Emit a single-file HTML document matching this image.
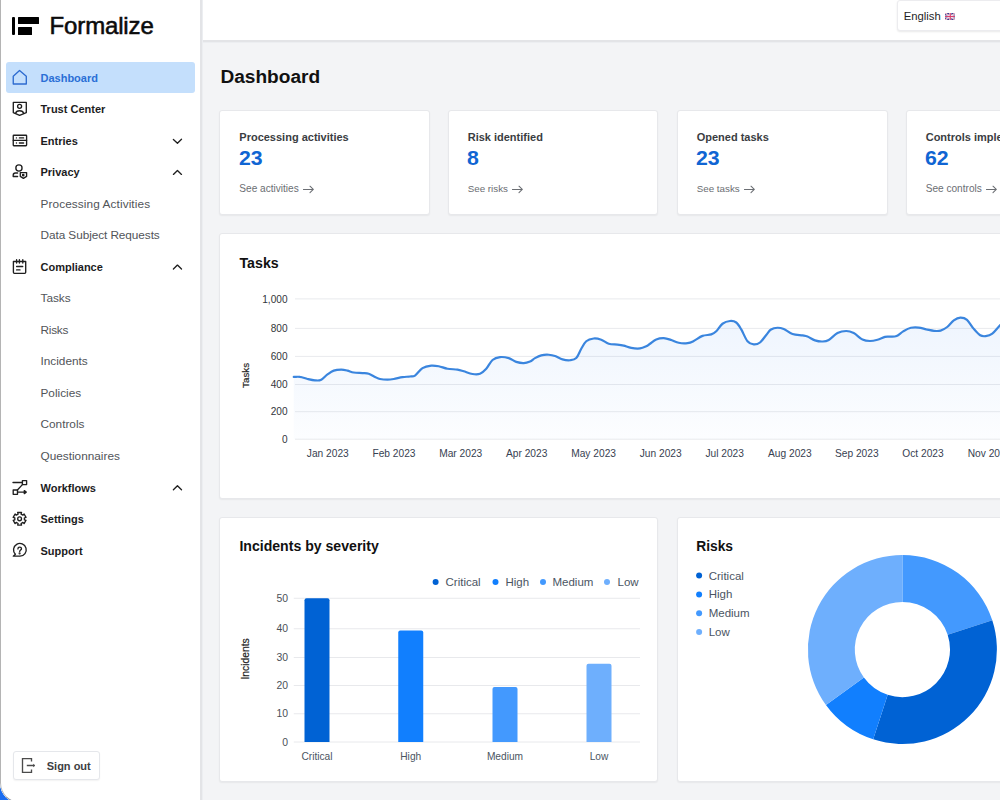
<!DOCTYPE html>
<html><head><meta charset="utf-8"><title>Formalize Dashboard</title>
<style>
*{box-sizing:border-box;margin:0;padding:0}
html,body{width:1000px;height:800px;overflow:hidden;background:#1a6cf0}
body{font-family:"Liberation Sans",sans-serif;position:relative}
#win{position:absolute;left:0;top:0;width:1000px;height:803px;background:#f3f4f6;border-bottom-left-radius:20px;overflow:hidden}
#frame{position:absolute;left:0;top:0;width:1000px;height:803px;border-left:1.5px solid #b4b4b4;border-bottom:1.5px solid #8a8f99;border-bottom-left-radius:20px}
.t{position:absolute;white-space:nowrap;line-height:0}
#side{position:absolute;left:0;top:0;width:202px;height:803px;background:#fff;border-right:2px solid #e3e4e7;box-shadow:1px 0 0 #eceef1}
#head{position:absolute;left:203px;top:0;width:797px;height:42px;background:#fff;border-bottom:2px solid #e3e4e7;box-shadow:0 1px 0 #eceef1}
.ic{position:absolute;left:8px;width:24px;height:24px;overflow:visible}
.card{position:absolute;background:#fff;border:1px solid #e7e8eb;border-radius:3px;box-shadow:0 1px 1.5px rgba(0,0,0,.05)}
svg text{font-family:"Liberation Sans",sans-serif}
</style></head><body>
<div id="win">
<div id="side">
<div style="position:absolute;left:12.25px;top:16.5px;width:3px;height:18px;background:#000;border-radius:1px"></div>
<div style="position:absolute;left:17.5px;top:16.6px;width:21.25px;height:7.9px;background:#000;border-radius:.5px"></div>
<div style="position:absolute;left:17.5px;top:26.9px;width:14px;height:7.7px;background:#000;border-radius:.5px"></div>
<div class="t" style="left:49.6px;top:26.18px;font-size:24px;color:#0b0b0b;letter-spacing:-0.15px;-webkit-text-stroke:0.55px #0b0b0b">Formalize</div>
<div style="position:absolute;left:6px;top:62px;width:189px;height:31px;background:#c4dffc;border-radius:3px"></div>
<div class="t" style="left:40.5px;top:77.69px;font-size:11px;color:#2a6fd6;font-weight:bold">Dashboard</div>
<div class="t" style="left:40.5px;top:109.22px;font-size:11px;color:#1c1c1e;font-weight:bold">Trust Center</div>
<div class="t" style="left:40.5px;top:140.75px;font-size:11px;color:#1c1c1e;font-weight:bold">Entries</div>
<div class="t" style="left:40.5px;top:172.28px;font-size:11px;color:#1c1c1e;font-weight:bold">Privacy</div>
<div class="t" style="left:40.5px;top:203.53px;font-size:11.8px;color:#515459;letter-spacing:0.1px">Processing Activities</div>
<div class="t" style="left:40.5px;top:235.06px;font-size:11.8px;color:#515459;letter-spacing:-0.07px">Data Subject Requests</div>
<div class="t" style="left:40.5px;top:266.87px;font-size:11px;color:#1c1c1e;font-weight:bold">Compliance</div>
<div class="t" style="left:40.5px;top:298.12px;font-size:11.8px;color:#515459;letter-spacing:0px">Tasks</div>
<div class="t" style="left:40.5px;top:329.65px;font-size:11.8px;color:#515459;letter-spacing:-0.25px">Risks</div>
<div class="t" style="left:40.5px;top:361.18px;font-size:11.8px;color:#515459;letter-spacing:0px">Incidents</div>
<div class="t" style="left:40.5px;top:392.71px;font-size:11.8px;color:#515459;letter-spacing:0px">Policies</div>
<div class="t" style="left:40.5px;top:424.24px;font-size:11.8px;color:#515459;letter-spacing:0px">Controls</div>
<div class="t" style="left:40.5px;top:455.77px;font-size:11.8px;color:#515459;letter-spacing:0px">Questionnaires</div>
<div class="t" style="left:40.5px;top:487.58px;font-size:11px;color:#1c1c1e;font-weight:bold">Workflows</div>
<div class="t" style="left:40.5px;top:519.11px;font-size:11px;color:#1c1c1e;font-weight:bold">Settings</div>
<div class="t" style="left:40.5px;top:550.64px;font-size:11px;color:#1c1c1e;font-weight:bold">Support</div>
<svg class="ic" style="top:66px" viewBox="0 0 24 24"><path d="M5.25,18 V10.2 L11.55,4.5 L18.3,10.2 V18 Z" fill="none" stroke="#2d6bd0" stroke-width="1.35" stroke-linejoin="round"/></svg>
<svg class="ic" style="top:97px" viewBox="0 0 24 24"><g fill="none" stroke="#1f1f1f" stroke-width="1.35" stroke-linecap="round" stroke-linejoin="round"><path d="M5.3,5.4 H18.3 V15.6 L11.6,18.3 L5.3,15.6 Z"/><circle cx="11.6" cy="9.3" r="2"/><path d="M7.6,16.4 C8,14.5 9.5,13.7 11.6,13.7 C13.7,13.7 15.2,14.5 15.6,16.4"/></g></svg>
<svg class="ic" style="top:128px" viewBox="0 0 24 24"><g fill="none" stroke="#1f1f1f" stroke-width="1.35" stroke-linecap="round" stroke-linejoin="round"><rect x="5.25" y="7.2" width="13.35" height="10.5" rx=".6"/><path d="M5.25,12.3 H18.6"/><path d="M8.4,9.9 h.1 M11.4,9.9 H15.6 M8.4,15 h.1 M11.4,15 H15.6"/></g></svg>
<svg class="ic" style="top:160px" viewBox="0 0 24 24"><g fill="none" stroke="#1f1f1f" stroke-width="1.35" stroke-linecap="round" stroke-linejoin="round"><circle cx="10.95" cy="7.95" r="3.1"/><path d="M9.6,13 H7.4 C6,13 5.2,14 5.2,15.2 V16.5 H9.6"/><path d="M12.3,12.6 H18.6 V16.4 L15.4,18.4 L12.3,16.4 Z"/><circle cx="15.2" cy="15.2" r=".7" fill="#1f1f1f"/></g></svg>
<svg class="ic" style="top:254px" viewBox="0 0 24 24"><g fill="none" stroke="#1f1f1f" stroke-width="1.35" stroke-linecap="round" stroke-linejoin="round"><path d="M5.4,7.5 H17.7 V18.3 Q17.7,19.3 16.7,19.3 H6.4 Q5.4,19.3 5.4,18.3 Z"/><path d="M8.6,5.7 V9 M11.4,5.7 V9 M14.8,5.7 V9"/><path d="M8.6,12.5 H14.7 M8.6,15.9 H12"/></g></svg>
<svg class="ic" style="top:475px" viewBox="0 0 24 24"><g fill="none" stroke="#1f1f1f" stroke-width="1.35" stroke-linecap="round" stroke-linejoin="round"><path d="M5,7.5 H14.4"/><rect x="14.4" y="5.6" width="4.2" height="4"/><path d="M14.4,9.6 L9.4,15"/><rect x="5.2" y="15" width="4.3" height="4.3"/><path d="M9.5,17.1 H17.6"/><path d="M16.3,15.6 L18.2,17.1 L16.3,18.6 Z" fill="#1f1f1f"/></g></svg>
<svg class="ic" style="top:506px" viewBox="0 0 24 24"><g fill="none" stroke="#1f1f1f" stroke-width="1.35" stroke-linecap="round" stroke-linejoin="round"><path d="M9.67,6.49 L13.53,6.49 L13.11,8.14 L14.88,9.16 L16.10,7.97 L18.03,11.32 L16.39,11.78 L16.39,13.82 L18.03,14.28 L16.10,17.63 L14.88,16.44 L13.11,17.46 L13.53,19.11 L9.67,19.11 L10.09,17.46 L8.32,16.44 L7.10,17.63 L5.17,14.28 L6.81,13.82 L6.81,11.78 L5.17,11.32 L7.10,7.97 L8.32,9.16 L10.09,8.14Z"/><circle cx="11.6" cy="12.8" r="1.9"/></g></svg>
<svg class="ic" style="top:538px" viewBox="0 0 24 24"><g fill="none" stroke="#1f1f1f" stroke-width="1.35" stroke-linecap="round" stroke-linejoin="round"><path d="M7.4,16.3 A6.35,6.35 0 1 1 12,18.15 H5.3 Z"/><path d="M9.9,10.9 C9.9,9.7 10.7,9.1 11.7,9.1 C12.7,9.1 13.5,9.8 13.5,10.7 C13.5,11.9 11.7,12.1 11.7,13.4"/><circle cx="11.6" cy="15.4" r=".4" fill="#1f1f1f"/></g></svg>
<svg style="position:absolute;left:0;top:0;width:202px;height:800px;overflow:visible" viewBox="0 0 202 800"><path d="M173.4,139.50 L177.45,143.20 L181.5,139.30" fill="none" stroke="#1f1f1f" stroke-width="1.35" stroke-linecap="round" stroke-linejoin="round"/></svg>
<svg style="position:absolute;left:0;top:0;width:202px;height:800px;overflow:visible" viewBox="0 0 202 800"><path d="M173.4,174.40 L177.45,170.50 L181.5,174.40" fill="none" stroke="#1f1f1f" stroke-width="1.35" stroke-linecap="round" stroke-linejoin="round"/></svg>
<svg style="position:absolute;left:0;top:0;width:202px;height:800px;overflow:visible" viewBox="0 0 202 800"><path d="M173.4,269.00 L177.45,265.10 L181.5,269.00" fill="none" stroke="#1f1f1f" stroke-width="1.35" stroke-linecap="round" stroke-linejoin="round"/></svg>
<svg style="position:absolute;left:0;top:0;width:202px;height:800px;overflow:visible" viewBox="0 0 202 800"><path d="M173.4,489.70 L177.45,485.80 L181.5,489.70" fill="none" stroke="#1f1f1f" stroke-width="1.35" stroke-linecap="round" stroke-linejoin="round"/></svg>
<div style="position:absolute;left:12.5px;top:751.25px;width:87.5px;height:28.75px;border:1px solid #e5e7eb;border-radius:3px;background:#fff;box-shadow:0 1px 1.5px rgba(0,0,0,.05)"></div>
<svg style="position:absolute;left:0;top:740px;width:60px;height:60px" viewBox="0 0 60 60"><g fill="none" stroke="#4b4b4b" stroke-width="1.35"><path d="M31.5,21.6 V18.6 H22.5 V32.4 H31.5 V29.4"/><path d="M26.8,25.5 H34.5"/></g><path d="M33.2,23.8 L35.2,25.5 L33.2,27.2 Z" fill="#4b4b4b"/></svg>
<div class="t" style="left:46.75px;top:766.19px;font-size:11px;color:#3d3e42;font-weight:bold">Sign out</div>
</div>
<div id="head"></div>
<div style="position:absolute;left:897px;top:-0.5px;width:120px;height:31.5px;border:1px solid #ececef;border-radius:3px;background:#fff;box-shadow:0 1px 2px rgba(0,0,0,.09)"></div>
<div class="t" style="left:903.7px;top:16.08px;font-size:11.3px;color:#1f1f1f">English</div>
<svg style="position:absolute;left:944.5px;top:12.5px;width:10.5px;height:7px" viewBox="0 0 60 40"><rect width="60" height="40" fill="#3b3f8f"/><path d="M0,0 L60,40 M60,0 L0,40" stroke="#fff" stroke-width="8"/><path d="M0,0 L60,40 M60,0 L0,40" stroke="#d8416e" stroke-width="3"/><path d="M30,0 V40 M0,20 H60" stroke="#fff" stroke-width="12"/><path d="M30,0 V40 M0,20 H60" stroke="#d8416e" stroke-width="7"/></svg>
<div class="t" style="left:220.4px;top:76.98px;font-size:19.1px;color:#111;font-weight:bold">Dashboard</div>
<div class="card" style="left:219px;top:110px;width:211px;height:105px"></div>
<div class="t" style="left:239.3px;top:137.19px;font-size:11px;color:#3a3d42;font-weight:bold">Processing activities</div>
<div class="t" style="left:239px;top:158.24px;font-size:19.5px;color:#1065d3;font-weight:bold;transform:scaleX(1.09);transform-origin:0 0">23</div>
<div class="t" style="left:239.3px;top:189.00px;font-size:10.1px;color:#6b6e73">See activities</div>
<svg style="position:absolute;left:302.80px;top:184px;width:12px;height:11px" viewBox="0 0 12 11"><path d="M0.3,5.4 H10.2 M7,2.2 L10.3,5.4 L7,8.6" fill="none" stroke="#6b6e73" stroke-width="1.05" stroke-linecap="round" stroke-linejoin="round"/></svg>
<div class="card" style="left:448px;top:110px;width:210px;height:105px"></div>
<div class="t" style="left:467.7px;top:137.19px;font-size:11px;color:#3a3d42;font-weight:bold">Risk identified</div>
<div class="t" style="left:467.4px;top:158.24px;font-size:19.5px;color:#1065d3;font-weight:bold;transform:scaleX(1.09);transform-origin:0 0">8</div>
<div class="t" style="left:467.7px;top:189.10px;font-size:9.8px;color:#6b6e73">See risks</div>
<svg style="position:absolute;left:512.00px;top:184px;width:12px;height:11px" viewBox="0 0 12 11"><path d="M0.3,5.4 H10.2 M7,2.2 L10.3,5.4 L7,8.6" fill="none" stroke="#6b6e73" stroke-width="1.05" stroke-linecap="round" stroke-linejoin="round"/></svg>
<div class="card" style="left:677px;top:110px;width:211px;height:105px"></div>
<div class="t" style="left:696.6999999999999px;top:137.19px;font-size:11px;color:#3a3d42;font-weight:bold">Opened tasks</div>
<div class="t" style="left:696.4px;top:158.24px;font-size:19.5px;color:#1065d3;font-weight:bold;transform:scaleX(1.09);transform-origin:0 0">23</div>
<div class="t" style="left:696.6999999999999px;top:189.10px;font-size:9.8px;color:#6b6e73">See tasks</div>
<svg style="position:absolute;left:743.73px;top:184px;width:12px;height:11px" viewBox="0 0 12 11"><path d="M0.3,5.4 H10.2 M7,2.2 L10.3,5.4 L7,8.6" fill="none" stroke="#6b6e73" stroke-width="1.05" stroke-linecap="round" stroke-linejoin="round"/></svg>
<div class="card" style="left:906px;top:110px;width:211px;height:105px"></div>
<div class="t" style="left:925.6999999999999px;top:137.19px;font-size:11px;color:#3a3d42;font-weight:bold">Controls implemented</div>
<div class="t" style="left:925.4px;top:158.24px;font-size:19.5px;color:#1065d3;font-weight:bold;transform:scaleX(1.09);transform-origin:0 0">62</div>
<div class="t" style="left:925.6999999999999px;top:189.00px;font-size:10.1px;color:#6b6e73">See controls</div>
<svg style="position:absolute;left:985.84px;top:184px;width:12px;height:11px" viewBox="0 0 12 11"><path d="M0.3,5.4 H10.2 M7,2.2 L10.3,5.4 L7,8.6" fill="none" stroke="#6b6e73" stroke-width="1.05" stroke-linecap="round" stroke-linejoin="round"/></svg>
<div class="card" style="left:219px;top:233px;width:900px;height:266px"></div>
<div class="t" style="left:239.5px;top:262.58px;font-size:14.2px;color:#111;font-weight:bold">Tasks</div>
<div class="card" style="left:219px;top:517px;width:439px;height:265px"></div>
<div class="t" style="left:239.4px;top:546.41px;font-size:14.1px;color:#111;font-weight:bold">Incidents by severity</div>
<div class="card" style="left:677px;top:517px;width:400px;height:265px"></div>
<div class="t" style="left:696.2px;top:546.92px;font-size:13.8px;color:#111;font-weight:bold">Risks</div>
<svg style="position:absolute;left:0;top:0;width:1000px;height:800px" viewBox="0 0 1000 800"><defs><linearGradient id="ag" x1="0" y1="0" x2="0" y2="1"><stop offset="0" stop-color="#3b86f0" stop-opacity=".085"/><stop offset="1" stop-color="#3b86f0" stop-opacity=".015"/></linearGradient></defs><line x1="295" x2="1000" y1="439.20" y2="439.20" stroke="#e9eaed" stroke-width="1"/><text x="287.5" y="442.80" font-size="10.1" fill="#33363b" text-anchor="end">0</text><line x1="295" x2="1000" y1="411.70" y2="411.70" stroke="#e9eaed" stroke-width="1"/><text x="287.5" y="415.30" font-size="10.1" fill="#33363b" text-anchor="end">200</text><line x1="295" x2="1000" y1="384.50" y2="384.50" stroke="#e9eaed" stroke-width="1"/><text x="287.5" y="388.10" font-size="10.1" fill="#33363b" text-anchor="end">400</text><line x1="295" x2="1000" y1="356.40" y2="356.40" stroke="#e9eaed" stroke-width="1"/><text x="287.5" y="360.00" font-size="10.1" fill="#33363b" text-anchor="end">600</text><line x1="295" x2="1000" y1="328.40" y2="328.40" stroke="#e9eaed" stroke-width="1"/><text x="287.5" y="332.00" font-size="10.1" fill="#33363b" text-anchor="end">800</text><line x1="295" x2="1000" y1="298.90" y2="298.90" stroke="#e9eaed" stroke-width="1"/><text x="287.5" y="302.50" font-size="10.1" fill="#33363b" text-anchor="end">1,000</text><path d="M293.75,376.9 C296.1,376.9 297.7,376.5 300,376.9 C302.3,377.2 305.0,378.4 307.5,379 C310.0,379.6 312.7,380.3 315,380.4 C317.3,380.5 319.2,380.8 321.25,379.75 C323.3,378.8 325.4,375.9 327.5,374.4 C329.6,372.9 331.5,371.4 333.75,370.6 C336.0,369.8 339.0,369.6 341.25,369.6 C343.5,369.6 345.4,370.1 347.5,370.6 C349.6,371.1 351.2,372.1 353.75,372.5 C356.2,372.9 360.0,372.9 362.5,373.1 C365.0,373.3 366.7,373.1 368.75,373.75 C370.8,374.4 373.1,376.0 375,376.9 C376.9,377.8 377.9,378.6 380,379 C382.1,379.4 385.2,379.6 387.5,379.6 C389.8,379.6 391.2,379.4 393.75,379 C396.2,378.6 399.8,377.5 402.5,377.1 C405.2,376.7 407.9,376.8 410,376.5 C412.1,376.2 412.9,377.0 415,375.6 C417.1,374.2 419.8,369.8 422.5,368.1 C425.2,366.4 428.5,365.9 431.25,365.6 C434.0,365.3 436.0,365.7 438.75,366.25 C441.5,366.8 444.4,368.2 447.5,368.75 C450.6,369.3 454.8,369.2 457.5,369.6 C460.2,370.0 461.2,370.5 463.75,371.25 C466.2,372.0 469.8,373.6 472.5,374 C475.2,374.4 477.7,374.6 480,373.75 C482.3,372.9 484.2,371.0 486.25,368.75 C488.3,366.5 490.2,361.9 492.5,360 C494.8,358.1 497.3,357.4 500,357.1 C502.7,356.8 506.0,357.3 508.75,358.1 C511.5,358.9 513.8,361.1 516.25,361.9 C518.8,362.7 521.5,363.2 523.75,363.1 C526.0,363.1 528.1,362.4 530,361.6 C531.9,360.8 533.1,359.1 535,358.1 C536.9,357.1 539.0,356.0 541.25,355.4 C543.5,354.8 546.5,354.6 548.75,354.75 C551.0,354.9 552.7,355.2 555,356 C557.3,356.8 560.0,358.7 562.5,359.4 C565.0,360.1 567.7,360.5 570,360.25 C572.3,360.0 574.4,360.0 576.25,358.1 C578.1,356.2 579.6,351.6 581.25,348.75 C582.9,345.9 584.2,343.0 586.25,341.25 C588.3,339.5 591.2,338.8 593.75,338.5 C596.2,338.2 598.8,338.9 601.25,339.75 C603.8,340.6 606.0,342.9 608.75,343.75 C611.5,344.6 615.0,344.3 617.5,344.6 C620.0,344.9 621.5,345.1 623.75,345.6 C626.0,346.2 628.5,347.4 631.25,347.9 C634.0,348.4 637.5,348.7 640,348.4 C642.5,348.1 644.6,347.0 646.25,346.25 C647.9,345.5 648.3,344.9 650,343.75 C651.7,342.6 654.0,340.3 656.25,339.4 C658.5,338.5 661.2,338.0 663.75,338.1 C666.2,338.2 668.8,339.2 671.25,340 C673.8,340.8 676.0,342.2 678.75,342.75 C681.5,343.3 685.0,343.4 687.5,343.1 C690.0,342.8 691.2,342.2 693.75,341 C696.2,339.8 699.6,337.0 702.5,335.9 C705.4,334.8 709.0,335.2 711.25,334.4 C713.5,333.6 714.4,333.0 716.25,331.25 C718.1,329.5 720.2,325.5 722.5,323.75 C724.8,322.0 727.7,321.2 730,321 C732.3,320.8 734.4,321.1 736.25,322.5 C738.1,323.9 739.4,326.3 741.25,329.4 C743.1,332.5 745.4,338.8 747.5,341.25 C749.6,343.8 751.7,344.2 753.75,344.4 C755.8,344.6 757.9,344.1 760,342.5 C762.1,340.9 764.4,337.2 766.25,335 C768.1,332.8 769.1,330.7 771,329.5 C772.9,328.3 775.4,327.8 777.5,327.75 C779.6,327.7 781.2,328.0 783.75,329 C786.2,330.0 789.4,332.9 792.5,334 C795.6,335.1 800.0,335.0 802.5,335.4 C805.0,335.8 805.4,335.7 807.5,336.5 C809.6,337.3 812.5,339.6 815,340.4 C817.5,341.2 820.2,341.6 822.5,341.5 C824.8,341.4 826.2,341.4 828.75,340 C831.2,338.6 834.6,334.6 837.5,333.1 C840.4,331.6 843.5,331.0 846.25,331 C849.0,331.0 851.0,331.7 853.75,333.1 C856.5,334.5 859.8,338.3 862.5,339.6 C865.2,340.9 867.5,341.0 870,341 C872.5,341.0 875.0,340.4 877.5,339.75 C880.0,339.1 882.9,337.4 885,336.9 C887.1,336.4 888.1,336.8 890,336.6 C891.9,336.5 894.4,336.9 896.6,336 C898.8,335.1 900.8,332.8 903.2,331.4 C905.6,330.0 908.3,328.4 910.9,327.8 C913.5,327.2 916.0,327.3 918.6,327.55 C921.2,327.8 923.7,328.8 926.3,329.4 C928.9,329.9 931.6,330.7 934,330.85 C936.4,331.1 938.4,331.2 940.6,330.6 C942.8,330.0 945.0,328.7 947.2,327 C949.4,325.3 951.6,322.0 953.8,320.4 C956.0,318.8 958.2,317.7 960.4,317.65 C962.6,317.6 964.8,318.0 967,319.85 C969.2,321.7 971.4,326.1 973.6,328.65 C975.8,331.2 978.2,334.0 980.2,335.25 C982.2,336.5 983.7,336.4 985.7,336.1 C987.7,335.8 989.9,335.4 992.3,333.6 C994.7,331.8 997.4,328.0 1000,325.35 C1002.6,322.8 1005.3,319.7 1008,318 L1008,439.2 L293.75,439.2 Z" fill="url(#ag)"/><path d="M293.75,376.9 C296.1,376.9 297.7,376.5 300,376.9 C302.3,377.2 305.0,378.4 307.5,379 C310.0,379.6 312.7,380.3 315,380.4 C317.3,380.5 319.2,380.8 321.25,379.75 C323.3,378.8 325.4,375.9 327.5,374.4 C329.6,372.9 331.5,371.4 333.75,370.6 C336.0,369.8 339.0,369.6 341.25,369.6 C343.5,369.6 345.4,370.1 347.5,370.6 C349.6,371.1 351.2,372.1 353.75,372.5 C356.2,372.9 360.0,372.9 362.5,373.1 C365.0,373.3 366.7,373.1 368.75,373.75 C370.8,374.4 373.1,376.0 375,376.9 C376.9,377.8 377.9,378.6 380,379 C382.1,379.4 385.2,379.6 387.5,379.6 C389.8,379.6 391.2,379.4 393.75,379 C396.2,378.6 399.8,377.5 402.5,377.1 C405.2,376.7 407.9,376.8 410,376.5 C412.1,376.2 412.9,377.0 415,375.6 C417.1,374.2 419.8,369.8 422.5,368.1 C425.2,366.4 428.5,365.9 431.25,365.6 C434.0,365.3 436.0,365.7 438.75,366.25 C441.5,366.8 444.4,368.2 447.5,368.75 C450.6,369.3 454.8,369.2 457.5,369.6 C460.2,370.0 461.2,370.5 463.75,371.25 C466.2,372.0 469.8,373.6 472.5,374 C475.2,374.4 477.7,374.6 480,373.75 C482.3,372.9 484.2,371.0 486.25,368.75 C488.3,366.5 490.2,361.9 492.5,360 C494.8,358.1 497.3,357.4 500,357.1 C502.7,356.8 506.0,357.3 508.75,358.1 C511.5,358.9 513.8,361.1 516.25,361.9 C518.8,362.7 521.5,363.2 523.75,363.1 C526.0,363.1 528.1,362.4 530,361.6 C531.9,360.8 533.1,359.1 535,358.1 C536.9,357.1 539.0,356.0 541.25,355.4 C543.5,354.8 546.5,354.6 548.75,354.75 C551.0,354.9 552.7,355.2 555,356 C557.3,356.8 560.0,358.7 562.5,359.4 C565.0,360.1 567.7,360.5 570,360.25 C572.3,360.0 574.4,360.0 576.25,358.1 C578.1,356.2 579.6,351.6 581.25,348.75 C582.9,345.9 584.2,343.0 586.25,341.25 C588.3,339.5 591.2,338.8 593.75,338.5 C596.2,338.2 598.8,338.9 601.25,339.75 C603.8,340.6 606.0,342.9 608.75,343.75 C611.5,344.6 615.0,344.3 617.5,344.6 C620.0,344.9 621.5,345.1 623.75,345.6 C626.0,346.2 628.5,347.4 631.25,347.9 C634.0,348.4 637.5,348.7 640,348.4 C642.5,348.1 644.6,347.0 646.25,346.25 C647.9,345.5 648.3,344.9 650,343.75 C651.7,342.6 654.0,340.3 656.25,339.4 C658.5,338.5 661.2,338.0 663.75,338.1 C666.2,338.2 668.8,339.2 671.25,340 C673.8,340.8 676.0,342.2 678.75,342.75 C681.5,343.3 685.0,343.4 687.5,343.1 C690.0,342.8 691.2,342.2 693.75,341 C696.2,339.8 699.6,337.0 702.5,335.9 C705.4,334.8 709.0,335.2 711.25,334.4 C713.5,333.6 714.4,333.0 716.25,331.25 C718.1,329.5 720.2,325.5 722.5,323.75 C724.8,322.0 727.7,321.2 730,321 C732.3,320.8 734.4,321.1 736.25,322.5 C738.1,323.9 739.4,326.3 741.25,329.4 C743.1,332.5 745.4,338.8 747.5,341.25 C749.6,343.8 751.7,344.2 753.75,344.4 C755.8,344.6 757.9,344.1 760,342.5 C762.1,340.9 764.4,337.2 766.25,335 C768.1,332.8 769.1,330.7 771,329.5 C772.9,328.3 775.4,327.8 777.5,327.75 C779.6,327.7 781.2,328.0 783.75,329 C786.2,330.0 789.4,332.9 792.5,334 C795.6,335.1 800.0,335.0 802.5,335.4 C805.0,335.8 805.4,335.7 807.5,336.5 C809.6,337.3 812.5,339.6 815,340.4 C817.5,341.2 820.2,341.6 822.5,341.5 C824.8,341.4 826.2,341.4 828.75,340 C831.2,338.6 834.6,334.6 837.5,333.1 C840.4,331.6 843.5,331.0 846.25,331 C849.0,331.0 851.0,331.7 853.75,333.1 C856.5,334.5 859.8,338.3 862.5,339.6 C865.2,340.9 867.5,341.0 870,341 C872.5,341.0 875.0,340.4 877.5,339.75 C880.0,339.1 882.9,337.4 885,336.9 C887.1,336.4 888.1,336.8 890,336.6 C891.9,336.5 894.4,336.9 896.6,336 C898.8,335.1 900.8,332.8 903.2,331.4 C905.6,330.0 908.3,328.4 910.9,327.8 C913.5,327.2 916.0,327.3 918.6,327.55 C921.2,327.8 923.7,328.8 926.3,329.4 C928.9,329.9 931.6,330.7 934,330.85 C936.4,331.1 938.4,331.2 940.6,330.6 C942.8,330.0 945.0,328.7 947.2,327 C949.4,325.3 951.6,322.0 953.8,320.4 C956.0,318.8 958.2,317.7 960.4,317.65 C962.6,317.6 964.8,318.0 967,319.85 C969.2,321.7 971.4,326.1 973.6,328.65 C975.8,331.2 978.2,334.0 980.2,335.25 C982.2,336.5 983.7,336.4 985.7,336.1 C987.7,335.8 989.9,335.4 992.3,333.6 C994.7,331.8 997.4,328.0 1000,325.35 C1002.6,322.8 1005.3,319.7 1008,318" fill="none" stroke="#3a85de" stroke-width="2.2" stroke-linecap="round"/><text x="327.8" y="457" font-size="10.2" fill="#374151" text-anchor="middle">Jan 2023</text><text x="394" y="457" font-size="10.2" fill="#374151" text-anchor="middle">Feb 2023</text><text x="460.7" y="457" font-size="10.2" fill="#374151" text-anchor="middle">Mar 2023</text><text x="526.7" y="457" font-size="10.2" fill="#374151" text-anchor="middle">Apr 2023</text><text x="593.6" y="457" font-size="10.2" fill="#374151" text-anchor="middle">May 2023</text><text x="660.7" y="457" font-size="10.2" fill="#374151" text-anchor="middle">Jun 2023</text><text x="724.7" y="457" font-size="10.2" fill="#374151" text-anchor="middle">Jul 2023</text><text x="789.9" y="457" font-size="10.2" fill="#374151" text-anchor="middle">Aug 2023</text><text x="856.8" y="457" font-size="10.2" fill="#374151" text-anchor="middle">Sep 2023</text><text x="923" y="457" font-size="10.2" fill="#374151" text-anchor="middle">Oct 2023</text><text x="989.5" y="457" font-size="10.2" fill="#374151" text-anchor="middle">Nov 2023</text><text transform="translate(248.8,375.4) rotate(-90)" font-size="9.9" fill="#1f1f1f" text-anchor="middle" stroke="#1f1f1f" stroke-width=".2">Tasks</text><line x1="293.75" x2="640" y1="742.00" y2="742.00" stroke="#e8e9ec" stroke-width="1"/><text x="288" y="745.60" font-size="10.4" fill="#4b5058" text-anchor="end">0</text><line x1="293.75" x2="640" y1="713.75" y2="713.75" stroke="#e8e9ec" stroke-width="1"/><text x="288" y="717.35" font-size="10.4" fill="#4b5058" text-anchor="end">10</text><line x1="293.75" x2="640" y1="685.50" y2="685.50" stroke="#e8e9ec" stroke-width="1"/><text x="288" y="689.10" font-size="10.4" fill="#4b5058" text-anchor="end">20</text><line x1="293.75" x2="640" y1="657.50" y2="657.50" stroke="#e8e9ec" stroke-width="1"/><text x="288" y="661.10" font-size="10.4" fill="#4b5058" text-anchor="end">30</text><line x1="293.75" x2="640" y1="628.75" y2="628.75" stroke="#e8e9ec" stroke-width="1"/><text x="288" y="632.35" font-size="10.4" fill="#4b5058" text-anchor="end">40</text><line x1="293.75" x2="640" y1="598.25" y2="598.25" stroke="#e8e9ec" stroke-width="1"/><text x="288" y="601.85" font-size="10.4" fill="#4b5058" text-anchor="end">50</text><path d="M304.5,742 V600.2 Q304.5,598.2 306.5,598.2 H327.5 Q329.5,598.2 329.5,600.2 V742 Z" fill="#0062d4"/><text x="317" y="759.5" font-size="10.2" fill="#4b5563" text-anchor="middle">Critical</text><path d="M398.25,742 V632.4 Q398.25,630.4 400.25,630.4 H421.25 Q423.25,630.4 423.25,632.4 V742 Z" fill="#117ffe"/><text x="410.75" y="759.5" font-size="10.2" fill="#4b5563" text-anchor="middle">High</text><path d="M492.5,742 V689 Q492.5,687 494.5,687 H515.5 Q517.5,687 517.5,689 V742 Z" fill="#4399fe"/><text x="505" y="759.5" font-size="10.2" fill="#4b5563" text-anchor="middle">Medium</text><path d="M586.5,742 V665.8 Q586.5,663.8 588.5,663.8 H609.5 Q611.5,663.8 611.5,665.8 V742 Z" fill="#6eaffd"/><text x="599" y="759.5" font-size="10.2" fill="#4b5563" text-anchor="middle">Low</text><text transform="translate(248.9,658.9) rotate(-90)" font-size="10.3" fill="#1f1f1f" text-anchor="middle" stroke="#1f1f1f" stroke-width=".2">Incidents</text><circle cx="435.6" cy="582" r="3" fill="#0062d4"/><text x="445.5" y="586.25" font-size="11.5" fill="#4b5563">Critical</text><circle cx="495.5" cy="582" r="3" fill="#117ffe"/><text x="505.5" y="586.25" font-size="11.5" fill="#4b5563">High</text><circle cx="543" cy="582" r="3" fill="#4399fe"/><text x="552.5" y="586.25" font-size="11.5" fill="#4b5563">Medium</text><circle cx="607" cy="582" r="3" fill="#6eaffd"/><text x="617.5" y="586.25" font-size="11.5" fill="#4b5563">Low</text><circle cx="699.1" cy="575.60" r="3" fill="#0062d4"/><text x="708.7" y="579.50" font-size="11.5" fill="#4b5563">Critical</text><circle cx="699.1" cy="594.40" r="3" fill="#117ffe"/><text x="708.7" y="598.30" font-size="11.5" fill="#4b5563">High</text><circle cx="699.1" cy="613.20" r="3" fill="#4399fe"/><text x="708.7" y="617.10" font-size="11.5" fill="#4b5563">Medium</text><circle cx="699.1" cy="632.00" r="3" fill="#6eaffd"/><text x="708.7" y="635.90" font-size="11.5" fill="#4b5563">Low</text><path d="M902.40,555.00 A94.5,94.5 0 0 1 992.27,620.30 L947.67,634.79 A47.6,47.6 0 0 0 902.40,601.90 Z" fill="#4399fe"/><path d="M992.27,620.30 A94.5,94.5 0 0 1 873.20,739.37 L887.69,694.77 A47.6,47.6 0 0 0 947.67,634.79 Z" fill="#0062d4"/><path d="M873.20,739.37 A94.5,94.5 0 0 1 825.95,705.05 L863.89,677.48 A47.6,47.6 0 0 0 887.69,694.77 Z" fill="#117ffe"/><path d="M825.95,705.05 A94.5,94.5 0 0 1 902.40,555.00 L902.40,601.90 A47.6,47.6 0 0 0 863.89,677.48 Z" fill="#6eaffd"/></svg>
<div id="frame"></div>
</div>
</body></html>
